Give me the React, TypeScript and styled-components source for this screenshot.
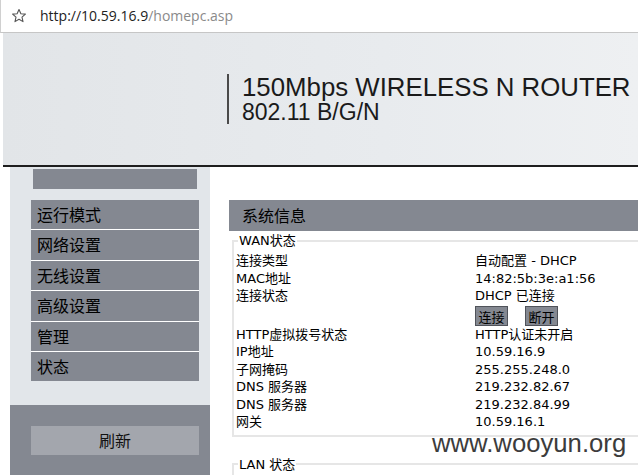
import { createGlobalStyle, styled } from "styled-components";

const GlobalStyle = createGlobalStyle`
    html, body {
        margin: 0;
        padding: 0;
        background: #ffffff;
        overflow: hidden;
    }
    body {
        font-family: "DejaVu Sans", "Noto Sans CJK SC", sans-serif;
        font-size: 13px;
        color: #000;
    }
`;

const Page = styled.div`
    position: relative;
    width: 638px;
    height: 475px;
    overflow: hidden;
`;

const AddressBar = styled.div`
    display: flex;
    align-items: center;
    padding-left: 10px;
    border-bottom: 1px solid #c6c6c6;
    border-left: 1px solid #d0d0d0;
    box-sizing: border-box;
    height: 33px;
`;

const Url = styled.div`
    margin-left: 13px;
    font-family: "Open Sans", "Noto Sans", sans-serif;
    font-size: 14px;
    margin-top: -2px;
`;

const Host = styled.span`
    color: #222;
`;

const Path = styled.span`
    color: #8a8a8a;
`;

const Header = styled.div`
    margin-left: 3px;
    background: linear-gradient(90deg, #e2e5e8 0%, #e8ebee 60%, #eef0f2 100%);
    border-bottom: 2px solid #1e1e1e;
    padding: 41px 0 0 224px;
    height: 91px;
`;

const Brand = styled.div`
    border-left: 2px solid #4a4a4a;
    padding-left: 13px;
    height: 50px;
    color: #1a1a1a;
    font-family: "Liberation Sans", Arial, sans-serif;
    white-space: nowrap;
`;

const BrandTitle = styled.div`
    font-size: 25.8px;
    line-height: 26px;
`;

const BrandSub = styled.div`
    font-size: 23px;
    line-height: 24px;
`;

const Main = styled.div`
    display: flex;
    align-items: flex-start;
`;

const Sidebar = styled.div`
    width: 200px;
    margin-left: 10px;
    flex-shrink: 0;
    display: flex;
    flex-direction: column;
`;

const SideTop = styled.div`
    background: #e2e6ea;
    padding: 2px 0 24px;
`;

const SideLogo = styled.div`
    height: 20px;
    width: 164px;
    margin-left: 23px;
    background: #848891;
`;

const Menu = styled.div`
    margin: 11px 0 0 21px;
    width: 168px;
`;

const MenuItem = styled.div`
    height: 29.4px;
    line-height: 29px;
    padding-left: 6px;
    background: #848891;
    border-bottom: 1px solid #ffffff;
    font-family: "Noto Sans CJK SC", sans-serif;
    font-size: 16px;
    color: #000;
    &:last-child {
        border-bottom: none;
    }
`;

const SideBottom = styled.div`
    background: #848891;
    height: 80px;
    padding-top: 21px;
    box-sizing: border-box;
`;

const RefreshButton = styled.div`
    margin-left: 21px;
    width: 168px;
    height: 29px;
    line-height: 29px;
    text-align: center;
    background: #a3a6ad;
    font-family: "Noto Sans CJK SC", sans-serif;
    font-size: 16px;
    color: #111;
`;

const Content = styled.div`
    margin: 33px 0 0 19px;
    width: 430px;
    flex-shrink: 0;
`;

const TitleBar = styled.div`
    height: 31px;
    line-height: 31px;
    padding-left: 13px;
    background: #848891;
    font-family: "Noto Sans CJK SC", sans-serif;
    font-size: 16px;
    color: #000;
`;

const Group = styled.fieldset<{ $gap: number }>`
    margin: ${(p) => p.$gap}px 0 0 3px;
    padding: 4px 0 4px 2px;
    border: 2px solid #e6e6e6;
    border-right: none;
    min-width: 0;
`;

const Legend = styled.legend`
    padding: 0 1px;
    margin-left: 2px;
    line-height: 15px;
    font-size: 13px;
`;

const Row = styled.div`
    display: flex;
    height: 17.5px;
    line-height: 17.5px;
    white-space: nowrap;
`;

const Label = styled.div`
    width: 239px;
`;

const Value = styled.div``;

const ButtonRow = styled.div`
    display: flex;
    gap: 17px;
    height: 21px;
    padding-left: 239px;
    align-items: flex-start;
    padding-top: 1px;
    box-sizing: border-box;
`;

const SmallButton = styled.button`
    width: 33px;
    height: 20px;
    padding: 0;
    background: #848891;
    border: 1px solid #50535a;
    font-family: "Noto Sans CJK SC", sans-serif;
    font-size: 13px;
    color: #000;
`;

const Watermark = styled.div`
    position: absolute;
    left: 432px;
    top: 429px;
    font-family: "Liberation Sans", Arial, sans-serif;
    font-size: 25.7px;
    color: #3c3c3c;
    text-shadow: 0 0 2px #fff, 0 0 3px #fff;
    white-space: nowrap;
`;

function StarIcon() {
    return (
        <svg width="16" height="16" viewBox="0 0 16 16">
            <path
                d="M8 1.5 L9.9 5.7 L14.4 6.1 L11 9.1 L12 13.6 L8 11.2 L4 13.6 L5 9.1 L1.6 6.1 L6.1 5.7 Z"
                fill="none"
                stroke="#555"
                strokeWidth="1.1"
                strokeLinejoin="round"
            />
        </svg>
    );
}

const menu = ["运行模式", "网络设置", "无线设置", "高级设置", "管理", "状态"];

const wanTop = [
    ["连接类型", "自动配置 - DHCP"],
    ["MAC地址", "14:82:5b:3e:a1:56"],
    ["连接状态", "DHCP 已连接"],
];

const wanBottom = [
    ["HTTP虚拟拨号状态", "HTTP认证未开启"],
    ["IP地址", "10.59.16.9"],
    ["子网掩码", "255.255.248.0"],
    ["DNS 服务器", "219.232.82.67"],
    ["DNS 服务器", "219.232.84.99"],
    ["网关", "10.59.16.1"],
];

export default function App() {
    return (
        <Page>
            <GlobalStyle />
            <AddressBar>
                <StarIcon />
                <Url>
                    <Host>http://10.59.16.9</Host>
                    <Path>/homepc.asp</Path>
                </Url>
            </AddressBar>
            <Header>
                <Brand>
                    <BrandTitle>150Mbps WIRELESS N ROUTER</BrandTitle>
                    <BrandSub>802.11 B/G/N</BrandSub>
                </Brand>
            </Header>
            <Main>
                <Sidebar>
                    <SideTop>
                        <SideLogo />
                        <Menu>
                            {menu.map((m) => (
                                <MenuItem key={m}>{m}</MenuItem>
                            ))}
                        </Menu>
                    </SideTop>
                    <SideBottom>
                        <RefreshButton>刷新</RefreshButton>
                    </SideBottom>
                </Sidebar>
                <Content>
                    <TitleBar>系统信息</TitleBar>
                    <Group $gap={2}>
                        <Legend>WAN状态</Legend>
                        {wanTop.map(([l, v]) => (
                            <Row key={l}>
                                <Label>{l}</Label>
                                <Value>{v}</Value>
                            </Row>
                        ))}
                        <ButtonRow>
                            <SmallButton>连接</SmallButton>
                            <SmallButton>断开</SmallButton>
                        </ButtonRow>
                        {wanBottom.map(([l, v], i) => (
                            <Row key={i}>
                                <Label>{l}</Label>
                                <Value>{v}</Value>
                            </Row>
                        ))}
                    </Group>
                    <Group $gap={20}>
                        <Legend>LAN 状态</Legend>
                    </Group>
                </Content>
            </Main>
            <Watermark>www.wooyun.org</Watermark>
        </Page>
    );
}
